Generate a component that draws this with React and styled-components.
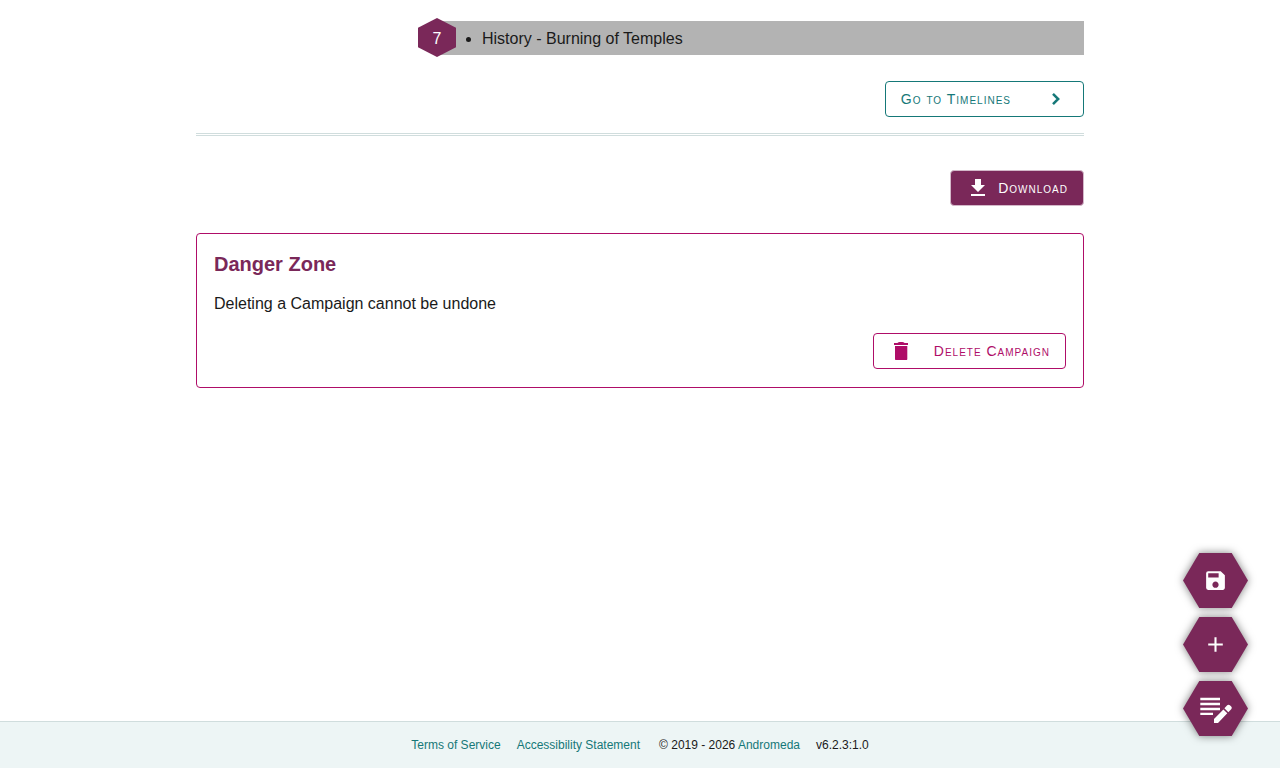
import React from 'react'
import styled, { createGlobalStyle } from 'styled-components'
import { MdFileDownload, MdSave, MdAdd } from 'react-icons/md'

const App = () => {
  return (
    <Page>
      <GlobalStyle />
      <Main>
        <TimelineEvent>
          <Badge>7</Badge>
          <EventList>
            <li>History - Burning of Temples</li>
          </EventList>
        </TimelineEvent>
        <Actions>
          <Button $color="#157878" $gap="33px">
            Go to Timelines
            <ChevronIcon />
          </Button>
        </Actions>
        <Divider />
        <Actions>
          <Button $filled $gap="8px">
            <MdFileDownload size={24} />
            Download
          </Button>
        </Actions>
        <DangerZone>
          <h2>Danger Zone</h2>
          <p>Deleting a Campaign cannot be undone</p>
          <Actions>
            <Button $color="#af0d68" $gap="21px">
              <TrashIcon />
              Delete Campaign
            </Button>
          </Actions>
        </DangerZone>
      </Main>
      <FloatingActions>
        <Shadow>
          <HexButton aria-label="Save">
            <MdSave size={25} />
          </HexButton>
        </Shadow>
        <Shadow>
          <HexButton aria-label="Add">
            <MdAdd size={25} />
          </HexButton>
        </Shadow>
        <Shadow>
          <HexButton aria-label="Edit notes">
            <NotesIcon />
          </HexButton>
        </Shadow>
      </FloatingActions>
      <Footer>
        <a href="#terms">Terms of Service</a>
        <a href="#accessibility">Accessibility Statement</a>
        <Copyright>
          © 2019 - 2026 <a href="#andromeda">Andromeda</a>
        </Copyright>
        <span>v6.2.3:1.0</span>
      </Footer>
    </Page>
  )
}

const ChevronIcon = () => (
  <svg width="24" height="24" viewBox="0 0 24 24" fill="none" stroke="currentColor" strokeWidth="2.5" aria-hidden="true">
    <path d="M9 6.800L14.200 12 9 17.200" />
  </svg>
)

const TrashIcon = () => (
  <svg width="24" height="24" viewBox="0 0 24 24" fill="currentColor" aria-hidden="true">
    <path d="M5 4h3.500C9 3.300 10 3 12 3s3 .3 3.500 1H19v2H5zM6 7h12.300v13c0 .6-.4 1-1 1H7c-.6 0-1-.4-1-1z" />
  </svg>
)

const NotesIcon = () => (
  <svg width="33" height="29" viewBox="0 0 33 29" fill="currentColor" aria-hidden="true">
    <path d="M1.300 3.800H21v2.400H1.300zM1.300 8.800H21v2.400H1.300zM1.300 13.800H21v2.400H1.300zM1.300 18.800H14v2.200H1.300z" />
    <path d="M15 25v4h4l9.300-9.700-3.900-3.900zM29.300 18.200l2.900-2.900c.8-.8.8-1.900 0-2.700l-1.300-1.300c-.8-.8-1.900-.8-2.700 0l-2.800 2.900z" />
  </svg>
)

const GlobalStyle = createGlobalStyle`
  * {
    box-sizing: border-box;
  }
  body {
    margin: 0;
    background: #fff;
    color: #1a1a1a;
    font-family: "Liberation Sans", Arial, sans-serif;
    font-size: 16px;
    line-height: 24px;
  }
  a {
    color: #157878;
    text-decoration: none;
  }
`;

const Page = styled.div`
  display: flex;
  flex-direction: column;
  min-height: 100vh;
`;

const Main = styled.main`
  width: 100%;
  max-width: 920px;
  margin: 0 auto;
  padding: 18px 16px 32px;
`;

const TimelineEvent = styled.div`
  display: flex;
  align-items: center;
  margin-left: 25%;
  margin-bottom: 24px;
`;

const Badge = styled.div`
  z-index: 1;
  display: flex;
  align-items: center;
  justify-content: center;
  width: 38px;
  height: 39px;
  padding-top: 2px;
  background: #7a2859;
  color: #fefefe;
  clip-path: polygon(50% 0, 100% 25%, 100% 75%, 50% 100%, 0 75%, 0 25%);
`;

const EventList = styled.ul`
  flex: 1;
  margin: 0 0 0 -19px;
  padding: 6px 5px 4px 45px;
  background: #b3b3b3;
`;

const Actions = styled.div`
  display: flex;
  justify-content: flex-end;
`;

const Button = styled.button`
  display: flex;
  align-items: center;
  gap: ${(props) => props.$gap};
  height: 36px;
  padding: 0 15px;
  border: 1px solid ${(props) => (props.$filled ? '#d3b8c9' : props.$color)};
  border-radius: 4px;
  background: ${(props) => (props.$filled ? '#7a2859' : '#fff')};
  color: ${(props) => (props.$filled ? '#fefefe' : props.$color)};
  font-family: inherit;
  font-size: 14px;
  font-variant: small-caps;
  letter-spacing: 1px;
  cursor: pointer;
`;

const Divider = styled.hr`
  margin: 16px 0 34px;
  border: 0;
  border-top: 3px double #d0dddd;
`;

const DangerZone = styled.section`
  margin-top: 27px;
  padding: 18px 17px;
  border: 1px solid #af0d68;
  border-radius: 4px;

  h2 {
    margin: 0 0 16px;
    color: #7a2859;
    font-size: 20px;
  }
  p {
    margin: 0 0 17px;
  }
`;

const FloatingActions = styled.div`
  position: fixed;
  right: 32px;
  bottom: 32px;
  display: flex;
  flex-direction: column;
  gap: 9px;
`;

const Shadow = styled.div`
  filter: drop-shadow(0 0 4px rgba(0, 0, 0, 0.5));
`;

const HexButton = styled.button`
  display: flex;
  align-items: center;
  justify-content: center;
  width: 65px;
  height: 55px;
  padding: 0;
  border: 0;
  background: #7a2859;
  color: #fefefe;
  clip-path: polygon(25% 0, 75% 0, 100% 50%, 75% 100%, 25% 100%, 0 50%);
  cursor: pointer;
`;

const Footer = styled.footer`
  display: flex;
  justify-content: center;
  gap: 16px;
  margin-top: auto;
  padding: 11px 16px;
  border-top: 1px solid #d0dddd;
  background: #edf5f5;
  font-size: 12px;
`;

const Copyright = styled.span`
  padding-left: 3px;
`;

export default App
